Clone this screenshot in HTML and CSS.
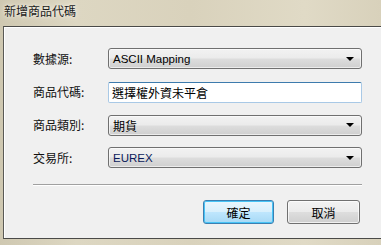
FILE: index.html
```html
<!DOCTYPE html>
<html lang="zh-Hant">
<head>
    <meta charset="UTF-8">
    <title>新增商品代碼</title>
    <link rel="stylesheet" href="styles.css">
</head>
<body>
    <div class="window">
        <div class="title-bar">
            <span class="title">新增商品代碼</span>
        </div>
        <div class="client">
            <div class="form">
                <label class="label">數據源:</label>
                <div class="combo"><span class="value">ASCII Mapping</span><span class="arrow"></span></div>

                <label class="label">商品代碼:</label>
                <div class="textbox">選擇權外資未平倉</div>

                <label class="label">商品類別:</label>
                <div class="combo"><span class="value cjk">期貨</span><span class="arrow"></span></div>

                <label class="label">交易所:</label>
                <div class="combo"><span class="value navy">EUREX</span><span class="arrow"></span></div>
            </div>
            <div class="separator"></div>
            <div class="buttons">
                <button class="btn btn-default">確定</button>
                <button class="btn">取消</button>
            </div>
        </div>
    </div>
</body>
</html>
```

FILE: styles.css
```css
body {
    margin: 0;
    padding: 0;
    font-family: "Noto Sans CJK TC", "Noto Sans", sans-serif;
    font-size: 12px;
    color: #000;
}
.window {
    width: 381px;
    height: 245px;
    background: linear-gradient(90deg, #cfc8b1 0%, #ddd7c2 20%, #d9d2bc 50%, #e0dac6 80%, #d8d1bb 100%);
    overflow: hidden;
}
.title-bar {
    height: 26px;
    padding-left: 4px;
    display: flex;
    align-items: center;
}
.title {
    font-size: 12px;
    line-height: 14px;
    color: #1a1a1a;
    text-shadow: 0 0 6px #f4f1e8, 0 0 3px #f4f1e8;
    margin-top: -4px;
}
.client {
    margin-left: 3px;
    height: 211px;
    background-color: #f0f0f0;
    border-top: 1px solid #4a4a48;
    border-left: 1px solid #5a5a56;
    border-bottom: 1px solid #4a4a48;
    box-shadow: inset 1px 1px 0 #ffffff;
}
.form {
    display: grid;
    grid-template-columns: 75px 254px;
    grid-auto-rows: 21px;
    row-gap: 12px;
    padding: 21px 0 0 29px;
    align-items: center;
}
.form > :nth-child(4),
.form > :nth-child(6) {
    margin-top: 1px;
}
.label {
    font-size: 12px;
    line-height: 16px;
    color: #111;
}
.combo {
    box-sizing: border-box;
    height: 21px;
    border: 1px solid #707070;
    border-radius: 3px;
    background: linear-gradient(#f2f2f2 0%, #ebebeb 48%, #dddddd 52%, #cfcfcf 100%);
    box-shadow: inset 0 0 0 1px rgba(255, 255, 255, 0.6);
    display: flex;
    align-items: center;
    justify-content: space-between;
    padding: 0 7px 0 4px;
}
.value {
    font-family: "Liberation Sans", Arial, sans-serif;
    font-size: 11.5px;
    color: #000;
}
.value.cjk {
    font-family: "Noto Sans CJK TC", sans-serif;
    font-size: 12px;
}
.value.navy {
    color: #0a1a5a;
}
.arrow {
    width: 0;
    height: 0;
    border-left: 4px solid transparent;
    border-right: 4px solid transparent;
    border-top: 4px solid #000;
}
.textbox {
    box-sizing: border-box;
    height: 21px;
    border: 1px solid #a9c9e6;
    border-top-color: #3d7bad;
    border-radius: 2px;
    background-color: #fff;
    padding: 0 3px;
    font-size: 12px;
    line-height: 19px;
}
.separator {
    margin: 16px 0 0 29px;
    width: 329px;
    height: 1px;
    background-color: #a0a0a0;
    border-bottom: 1px solid #ffffff;
}
.buttons {
    display: flex;
    gap: 13px;
    padding: 14px 0 0 199px;
}
.btn {
    box-sizing: border-box;
    width: 73px;
    height: 24px;
    border: 1px solid #707070;
    border-radius: 3px;
    background: linear-gradient(#f2f2f2 0%, #ebebeb 48%, #dddddd 52%, #cfcfcf 100%);
    box-shadow: inset 0 0 0 1px rgba(255, 255, 255, 0.7);
    font-family: "Noto Sans CJK TC", sans-serif;
    font-size: 12px;
    color: #000;
    padding: 0;
}
.btn-default {
    width: 71px;
    border-color: #3c7fb1;
    background: linear-gradient(#eaf6fd 0%, #d9f0fc 48%, #bee6fd 52%, #a7d9f5 100%);
    box-shadow: inset 0 0 0 1px #48c4f6;
}
```
